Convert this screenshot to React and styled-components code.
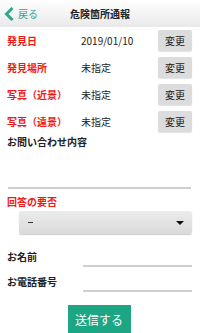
import styled, { createGlobalStyle } from 'styled-components';

const Global = createGlobalStyle`
  body {
    margin: 0;
    background: #fff;
    font-family: 'Noto Sans CJK JP', 'Noto Sans', sans-serif;
    color: #222;
  }
`;

const Page = styled.div`
  width: 200px;
  height: 333px;
  overflow: hidden;
`;

const Header = styled.div`
  position: relative;
  display: flex;
  align-items: center;
  justify-content: center;
  height: 27px;
  background: linear-gradient(#ffffff, #e9e9e9);
`;

const Back = styled.div`
  position: absolute;
  left: 4px;
  top: 0;
  height: 27px;
  display: flex;
  align-items: center;
  gap: 4px;
  color: #2ba98b;
  font-size: 10px;
`;

const Title = styled.div`
  font-size: 10px;
  font-weight: bold;
  color: #222;
`;

const Body = styled.div`
  padding: 0 8px 0 7px;
`;

const Row = styled.div`
  display: flex;
  align-items: center;
  height: 27px;
`;

const Label = styled.div`
  width: 74px;
  font-size: 10px;
  font-weight: bold;
  color: ${(p) => (p.red ? '#f01818' : '#222')};
`;

const Value = styled.div`
  flex: 1;
  font-size: 10px;
  color: #222;
`;

const SmallButton = styled.div`
  width: 34px;
  height: 21px;
  display: flex;
  align-items: center;
  justify-content: center;
  background: #dcdcdc;
  border-radius: 2px;
  box-shadow: 0 1px 1px rgba(0, 0, 0, 0.12);
  font-size: 10px;
  color: #222;
`;

const Section = styled.div`
  padding-top: ${(p) => p.top || 0}px;
  font-size: 10px;
  font-weight: bold;
  line-height: 13px;
  color: ${(p) => (p.red ? '#f01818' : '#222')};
`;

const TextArea = styled.div`
  margin: 0 1px 0 1px;
  height: 39px;
  border-bottom: 2px solid #cfcfcf;
`;

const SelectBox = styled.div`
  margin: 3px 0 0 12px;
  height: 23px;
  display: flex;
  align-items: center;
  justify-content: space-between;
  padding: 0 8px 0 9px;
  background: linear-gradient(#ebebeb, #dadada);
  border-radius: 2px;
  box-shadow: 0 1px 1px rgba(0, 0, 0, 0.2);
  font-size: 10px;
  color: #333;
`;

const Dash = styled.div`
  width: 5px;
  height: 1px;
  background: #333;
`;

const Caret = styled.div`
  width: 0;
  height: 0;
  border-left: 4px solid transparent;
  border-right: 4px solid transparent;
  border-top: 4px solid #111;
`;

const FieldRow = styled.div`
  display: flex;
  align-items: flex-end;
  height: ${(p) => p.h}px;
`;

const FieldLabel = styled.div`
  width: 76px;
  font-size: 10px;
  font-weight: bold;
  line-height: 13px;
  padding-bottom: 4px;
  color: #222;
`;

const Line = styled.div`
  flex: 1;
  height: 0;
  border-bottom: 2px solid #cfcfcf;
`;

const Footer = styled.div`
  display: flex;
  justify-content: center;
  padding-top: 13px;
  padding-right: 1px;
`;

const Submit = styled.div`
  width: 63px;
  height: 28px;
  display: flex;
  align-items: center;
  justify-content: center;
  background: #1ca683;
  color: #fff;
  font-size: 12px;
`;

const rows = [
  ['発見日', '2019/01/10'],
  ['発見場所', '未指定'],
  ['写真（近景）', '未指定'],
  ['写真（遠景）', '未指定'],
];

export default function App() {
  return (
    <Page>
      <Global />
      <Header>
        <Back>
          <svg width="10" height="14" viewBox="0 0 10 14">
            <path d="M8.5 1 L2.5 7 L8.5 13" fill="none" stroke="#2ba98b" strokeWidth="3" />
          </svg>
          <span>戻る</span>
        </Back>
        <Title>危険箇所通報</Title>
      </Header>
      <Body>
        {rows.map(([label, value]) => (
          <Row key={label}>
            <Label red>{label}</Label>
            <Value>{value}</Value>
            <SmallButton>変更</SmallButton>
          </Row>
        ))}
        <Section top={0}>お問い合わせ内容</Section>
        <TextArea />
        <Section red top={6}>回答の要否</Section>
        <SelectBox>
          <Dash />
          <Caret />
        </SelectBox>
        <FieldRow h={33}>
          <FieldLabel>お名前</FieldLabel>
          <Line />
        </FieldRow>
        <FieldRow h={25}>
          <FieldLabel>お電話番号</FieldLabel>
          <Line />
        </FieldRow>
        <Footer>
          <Submit>送信する</Submit>
        </Footer>
      </Body>
    </Page>
  );
}
